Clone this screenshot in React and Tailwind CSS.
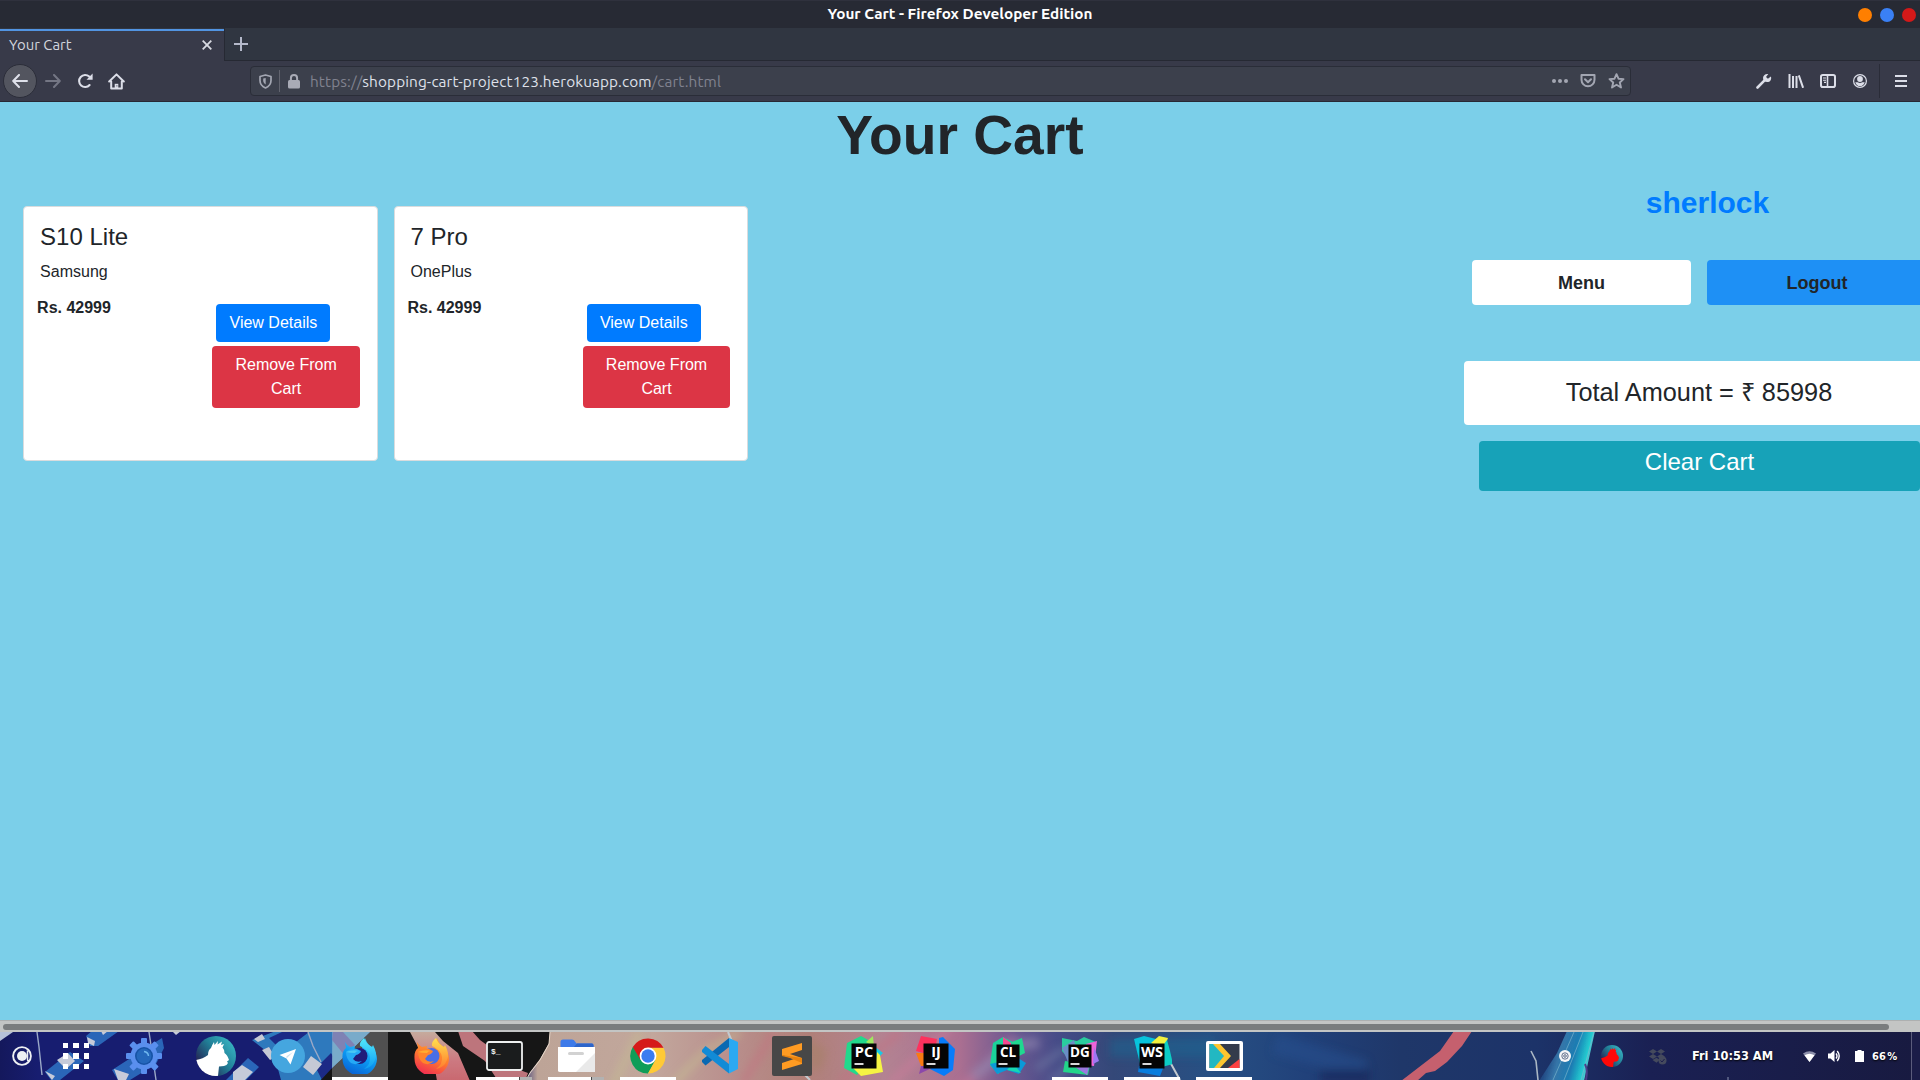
import React from "react";

const products = [
  { name: "S10 Lite", brand: "Samsung", price: "Rs. 42999" },
  { name: "7 Pro", brand: "OnePlus", price: "Rs. 42999" },
];

/* ---------- window title, tabs and toolbar ---------- */

function TitleBar() {
  return (
    <div className="relative flex h-7 shrink-0 items-center justify-center border-t border-[#2f313d] bg-[#272a34]">
      <span className="pb-0.5 text-[15.300px] leading-none font-bold text-white">
        Your Cart - Firefox Developer Edition
      </span>
      <div className="absolute right-1 flex gap-2">
        <i className="size-3.5 rounded-full bg-[#ff7f00]" />
        <i className="size-3.5 rounded-full bg-[#3a80f5]" />
        <i className="size-3.5 rounded-full bg-[#d41919]" />
      </div>
    </div>
  );
}

function TabBar() {
  return (
    <div className="flex h-[33px] shrink-0 bg-[#303641]">
      <div className="mt-px flex w-56 items-center justify-between border-t-2 border-[#5294e2] bg-[#383a49] pr-3 pb-0.5 pl-[9px]">
        <span className="text-[14.9px] leading-none text-[#d3d5de]">Your Cart</span>
        <svg width="10" height="10" viewBox="0 0 10 10" stroke="#d8dae2" strokeWidth="1.8">
          <path d="M.7.7l8.600 8.600M9.300.7L.7 9.300" />
        </svg>
      </div>
      <div className="flex flex-1 items-center border-b border-l border-[#262933] pl-[9px]">
        <svg width="14" height="14" viewBox="0 0 14 14" stroke="#b4b9ca" strokeWidth="2">
          <path d="M7 0v14M0 7h14" />
        </svg>
      </div>
    </div>
  );
}

function Toolbar() {
  return (
    <div className="flex h-[41px] shrink-0 items-center border-b border-[#272934] bg-[#383a49]">
      <div className="ml-[3px] flex size-[34px] items-center justify-center rounded-full border border-[#2b2d39] bg-[#53555f]">
        <svg width="16" height="14" viewBox="0 0 16 14" fill="none" stroke="#dfe1ea" strokeWidth="2" strokeLinecap="round" strokeLinejoin="round">
          <path d="M15 7H1.5M7 1L1.2 7 7 13" />
        </svg>
      </div>
      <svg className="ml-2" width="16" height="14" viewBox="0 0 16 14" fill="none" stroke="#747684" strokeWidth="2" strokeLinecap="round" strokeLinejoin="round">
        <path d="M1 7h13.5M9 1l5.8 6L9 13" />
      </svg>
      <svg className="ml-4" width="17" height="16" viewBox="0 0 17 16" fill="none" stroke="#dcdee8" strokeWidth="2.1">
        <path d="M12.6 12A6 6 0 1 1 12.2 3.6" strokeLinecap="round" />
        <path d="M15.6.6v6.1H9.5z" fill="#dcdee8" stroke="none" />
      </svg>
      <svg className="ml-3.5" width="17" height="17" viewBox="0 0 17 17" fill="none" stroke="#dcdee8" strokeWidth="2" strokeLinejoin="round" strokeLinecap="round">
        <path d="M1.2 8.5L8.5 1.4l7.3 7.1M3.2 8.5v7h10.6v-7" />
        <path d="M8.5 15.2v-4.4" strokeWidth="3.6" strokeLinecap="butt" />
        <path d="M8.9 12.4v1" stroke="#383a49" strokeWidth="1" strokeLinecap="butt" />
      </svg>
      <div className="ml-[125px] flex h-[30px] w-[1381px] items-center rounded-[4px] border border-[#2a2d38] bg-[#3c404c] pr-[5px] pl-2">
        <svg width="13" height="15" viewBox="0 0 13 15" fill="none" stroke="#a3a6b2" strokeWidth="1.7">
          <path d="M6.5 1L12 2.5V6.500c0 3.500-2.200 6-5.500 7.500C3.200 12.500 1 10 1 6.500V2.500z" strokeLinejoin="round" />
          <path d="M6.700 4v6.600C5.200 9.600 4.200 8.300 4.200 6.500V4.500z" fill="#a3a6b2" stroke="none" />
        </svg>
        <i className="ml-[7px] h-[22px] w-px bg-[#62646f]" />
        <svg className="ml-2" width="12" height="15" viewBox="0 0 12 15">
          <path d="M2.900 7V4.200a3.100 3.100 0 0 1 6.200 0V7" fill="none" stroke="#a9abb6" strokeWidth="2" />
          <rect x="0" y="6" width="12" height="8.500" rx="1.500" fill="#a9abb6" />
        </svg>
        <span className="ml-2.5 pt-0.5 text-[15.33px] leading-none tracking-[0.115px] whitespace-nowrap text-[#80828f]">
          https://<span className="text-[#dfe1ea]">shopping-cart-project123.herokuapp.com</span>/cart.html
        </span>
        <div className="ml-auto flex items-center gap-3">
          <svg width="16" height="4" viewBox="0 0 16 4" fill="#a3a6b2">
            <circle cx="2" cy="2" r="2" /><circle cx="8" cy="2" r="2" /><circle cx="14" cy="2" r="2" />
          </svg>
          <svg width="16" height="14" viewBox="0 0 16 14" fill="none" stroke="#a3a6b2" strokeWidth="2" strokeLinecap="round" strokeLinejoin="round">
            <path d="M1.500 1h13v4.800a6.500 6.500 0 0 1-13 0z" /><path d="M5 5.300l3 2.900 3-2.900" />
          </svg>
          <svg width="17" height="16" viewBox="0 0 17 16" fill="none" stroke="#a3a6b2" strokeWidth="1.900" strokeLinejoin="round">
            <path d="M8.500 1.200l2 4.500 5 .4-3.700 3.400 1.200 5-4.500-2.700L4 14.500l1.200-5L1.500 6.100l5-.4z" />
          </svg>
        </div>
      </div>
      <div className="ml-auto flex h-full items-center pr-3">
        <svg width="16" height="16" viewBox="0 0 16 16">
          <path d="M1.500 14.500L8.300 7.700" stroke="#dcdee8" strokeWidth="2.600" strokeLinecap="round" />
          <path d="M14.900 3.400l-3 2.300-1.900-1.600L12.300 1C9.500.4 7 2.200 7 5c0 2.500 1.800 4.100 4.200 4.100 2.900 0 4.700-2.700 3.700-5.700z" fill="#dcdee8" />
        </svg>
        <svg className="ml-4" width="16" height="14" viewBox="0 0 16 14" stroke="#dcdee8" strokeWidth="2">
          <path d="M1.500 0v14M5 2v12M8.500 2v12M10.800 1.300l4.300 12.500" />
        </svg>
        <svg className="ml-4" width="16" height="14" viewBox="0 0 16 14" fill="none" stroke="#dcdee8">
          <rect x="1" y="1" width="14" height="12" rx="1.800" strokeWidth="2" /><path d="M7.500 1v12" strokeWidth="1.600" /><path d="M3 4h3M3 6.200h3M4 8.400h2" strokeWidth="1.100" />
        </svg>
        <svg className="ml-[17px]" width="14" height="14" viewBox="0 0 14 14">
          <circle cx="7" cy="7" r="6.400" fill="none" stroke="#dcdee8" strokeWidth="1.200" />
          <circle cx="7" cy="5" r="2.900" fill="#dcdee8" />
          <path d="M2.300 8.200h2.400c1.500 1.100 3.100 1.100 4.600 0h2.400c-.5 2.400-2.400 3.900-4.700 3.900S2.800 10.600 2.300 8.200z" fill="#dcdee8" />
        </svg>
        <i className="ml-3 h-[34px] w-px bg-[#2a2c38]" />
        <svg className="mr-px ml-[15px]" width="12" height="12" viewBox="0 0 12 12" stroke="#dcdee8" strokeWidth="2">
          <path d="M0 1h12M0 6h12M0 11h12" />
        </svg>
      </div>
    </div>
  );
}

/* ---------- page ---------- */

function ProductCard({ product }) {
  return (
    <article className="h-[255px] w-[354.4px] rounded-[4px] border border-[#d9dcde] bg-white pt-4 pl-[15.700px]">
      <h5 className="text-2xl leading-[28.8px]">{product.name}</h5>
      <p className="mt-2 text-base leading-6">{product.brand}</p>
      <div className="mt-3 flex">
        <strong className="-ml-[3px] w-[175.300px] text-base leading-6">{product.price}</strong>
        <div className="mt-2 flex flex-col items-start gap-1">
          <button className="ml-1 h-[38px] w-[114px] rounded-[4px] bg-[#007bff] text-base text-white">View Details</button>
          <button className="h-[62px] w-[147.500px] rounded-[4px] bg-[#dc3545] px-4 text-base leading-6 text-white">Remove From Cart</button>
        </div>
      </div>
    </article>
  );
}

function CartPage() {
  return (
    <main className="h-[918px] shrink-0 overflow-hidden bg-[#7bcfe9] font-['Liberation_Sans',Arial,sans-serif] text-[#212529]">
      <h1 className="h-[67px] text-center text-[55.200px] leading-[67px] font-bold">Your Cart</h1>
      <div className="flex items-start justify-between">
        <section className="mt-[37px] ml-[23.400px] flex gap-4">
          {products.map((p) => <ProductCard key={p.name} product={p} />)}
        </section>
        <aside className="-mr-3.5 w-[470px]">
          <h2 className="mt-4 pl-[17px] text-center text-[30px] leading-9 font-bold text-[#007bff]">sherlock</h2>
          <nav className="mt-[39px] flex gap-4 pl-2 text-lg font-bold">
            <button className="h-[45px] w-[219px] shrink-0 rounded-[4px] bg-white pt-px">Menu</button>
            <button className="h-[45px] w-[220px] shrink-0 rounded-[4px] bg-[#1e90f5] pt-px">Logout</button>
          </nav>
          <p className="mt-14 h-16 rounded-[4px] bg-white pt-4 text-center text-[25.300px] leading-[30px]">Total Amount = ₹ 85998</p>
          <button className="mt-4 ml-[15px] block h-[50px] w-[441px] rounded-[4px] bg-[#17a2b8] pb-2 text-2xl text-white">Clear Cart</button>
        </aside>
      </div>
    </main>
  );
}

function Scrollbar() {
  return (
    <div className="flex h-3 shrink-0 items-center border-t border-[#adb0b0] bg-[#c3c5c4] pl-[3px]">
      <i className="h-1.5 w-[1886px] rounded-full bg-[#7a7d7e]" />
    </div>
  );
}

/* ---------- dock ---------- */

function Wallpaper() {
  return (
    <svg className="absolute inset-0" width="1920" height="48" viewBox="0 0 1920 48" preserveAspectRatio="none">
      <defs>
        <linearGradient id="sky" x1="0" x2="1920" y1="0" y2="0" gradientUnits="userSpaceOnUse">
          <stop offset="0" stopColor="#14185c" /><stop offset=".02" stopColor="#171d70" /><stop offset=".27" stopColor="#171d70" />
          <stop offset=".28" stopColor="#bda497" /><stop offset=".34" stopColor="#c2a79c" /><stop offset=".38" stopColor="#b98f8d" />
          <stop offset=".42" stopColor="#b08079" /><stop offset=".46" stopColor="#b38392" /><stop offset=".5" stopColor="#aa6f91" />
          <stop offset=".525" stopColor="#705a91" /><stop offset=".55" stopColor="#474c88" /><stop offset=".58" stopColor="#344878" />
          <stop offset=".63" stopColor="#275083" /><stop offset=".68" stopColor="#21417a" /><stop offset=".73" stopColor="#1f3769" />
          <stop offset=".8" stopColor="#1c3369" /><stop offset=".86" stopColor="#1a2053" /><stop offset="1" stopColor="#181a40" />
        </linearGradient>
        <linearGradient id="arm" x1="0" x2="0" y1="0" y2="1"><stop offset="0" stopColor="#c5ab9d" /><stop offset=".6" stopColor="#cc7880" /><stop offset="1" stopColor="#c9686f" /></linearGradient>
        <linearGradient id="ribbon" x1="1545" x2="1592" y1="20" y2="32" gradientUnits="userSpaceOnUse"><stop offset="0" stopColor="#1c3b78" /><stop offset=".3" stopColor="#3576a9" /><stop offset=".6" stopColor="#1b7cb3" /><stop offset=".85" stopColor="#22cbd0" /><stop offset="1" stopColor="#8dbccc" /></linearGradient>
        <filter id="soft"><feGaussianBlur stdDeviation=".6" /></filter>
        <filter id="haze" x="-20%" y="-50%" width="140%" height="200%"><feGaussianBlur stdDeviation="4" /></filter>
      </defs>
      <rect width="1920" height="48" fill="url(#sky)" />
      <g filter="url(#soft)">
        <path d="M0 0h13L0 9z" fill="#b5c1d9" />
        <path d="M86 4L92-1h27l-21 15h-8z M45 40L70 20l14 9-24 19h-9z M112 38l28-18 22-14 2 10-8 16-26 16h-12z M226 48l22-22 11 9-13 13z" fill="#2b66b8" />
        <path d="M87 5l8 4-1 5-6-3z M57 28l11-7 7 8-9 8z M114 37l15 5-3 6h-8z M233 40l9-7 11 7-8 8h-12z M45 39l10 5-3 4z M172-1h9l-5 4z M101-1h7l-5 4z" fill="#c6cbd9" />
        <path d="M252 8L276-1h95l-38 37-12 12h-40l-6-22z" fill="#2f79bd" />
        <path d="M282 0l27 0-26 20-14-14z M316 36l15-15 6 10-15 17z" fill="#1b2c86" />
        <path d="M254 7l8-5 3 5-7 3z M262 18l7-3 6 10-5 3z M311 24l11 8-9 11-10-8z" fill="#c5c9d5" />
        <path d="M37 0l2 15 3 28M149 0l3 20 4 28M308 0l5 14 8 16" fill="none" stroke="#9ba9c7" strokeWidth="1.400" />
        <path d="M371-1h179l-1 12-9 16-10 13-4 9H320l13-14z" fill="#161616" />
        <path d="M333-1h38l-39 37z" fill="#4e8fb9" /><path d="M333 0l10 0 12 13-10 11-13-16z" fill="#55599b" />
        <path d="M410 0h25l8 9 15 12 12 28h-33l-2-12-16-20z" fill="url(#arm)" />
        <path d="M458-1h14l8 9 11 8 15 17 22 8-3 8h-27l-13-20-22-15z" fill="#bd747b" />
        <path d="M550 0l-1 12-9 16-10 13-4 7" fill="none" stroke="#e7d9cb" />
      </g>
      <g filter="url(#haze)" fill="none" strokeWidth="7" opacity=".55">
        <path d="M670 55L705 20 740 0M612 55L640 0" stroke="#c5bf91" />
        <path d="M742 52l32-52M840 50l60-50" stroke="#c56f80" /><path d="M805 12l14 10-5 15" stroke="#a58066" strokeWidth="14" />
        <path d="M890 52L950-4M960 58l54-53" stroke="#cf7d9b" /><path d="M973 45l40-32 26-2" stroke="#9a91b8" strokeWidth="10" />
        <path d="M1036 37l28-20M1050 50l30-24" stroke="#7580a7" /><path d="M1110 16h105" stroke="#1f6591" strokeWidth="18" />
        <path d="M1275 12l90 26" stroke="#25508e" strokeWidth="20" /><path d="M1320 44h50" stroke="#192157" strokeWidth="14" />
      </g>
      <g filter="url(#soft)">
        <path d="M728 0l5 12M804 42l6 6M1170 30l10 18" stroke="#c3c9cf" strokeWidth="2" />
        <path d="M1454-1h18l-10 15-15 16-12 9-9 2-9 8h-16l13-10 26-20z" fill="#c5606e" />
        <path d="M1567-1h28l-11 50h-45l18-28z" fill="url(#ribbon)" />
        <path d="M1594 0l-13 48M1583 0l-19 48M1574 0l-21 48" stroke="#80b9ce" strokeWidth=".9" opacity=".7" />
        <path d="M1531 19l5 10 2 19" stroke="#aab7c4" strokeWidth="1.600" fill="none" />
        <path d="M1585 32q3 6 1 16" stroke="#4b3f89" strokeWidth="2" fill="none" />
        <path d="M1728 45v3" stroke="#8890ad" />
      </g>
      <path d="M1911.500 0v48" stroke="#5b5c7c" />
      <rect x="1912" width="8" height="48" fill="#1b1d48" />
    </svg>
  );
}

const Gear = () => (
  <svg width="36" height="36" viewBox="-18 -18 36 36">
    {[0, 45, 90, 135, 180, 225, 270, 315].map((a) => <rect key={a} x="-3" y="-18" width="6" height="8" rx="1" fill="#5a8fee" transform={`rotate(${a})`} />)}
    <circle r="13.500" fill="#5a8fee" /><circle r="9" fill="#1753a6" /><circle r="7.400" fill="#2467bb" />
    <path d="M0-4.500Q4-4 4.500 0" fill="none" stroke="#6fb7ef" strokeWidth="1.500" />
  </svg>
);

function Bird({ size, body, id }) {
  return (
    <svg width={size} height={size} viewBox="0 0 40 40">
      <defs>
        <linearGradient id={id} x1="1" x2="0" y1="0" y2=".8"><stop offset="0" stopColor="#3ec4cf" /><stop offset=".5" stopColor="#217e96" /><stop offset="1" stopColor="#251046" /></linearGradient>
        <clipPath id={id + "c"}><circle cx="20" cy="20" r="20" /></clipPath>
      </defs>
      <circle cx="20" cy="20" r="20" fill={`url(#${id})`} />
      <path clipPath={`url(#${id}c)`} fill={body} d="M0 24q7-1 12-5 0-5 3-7 1-3 3-6l.5 3 3.500-4-.5 3.500L26 5.500 25 9l3-1-1.500 3.500q2 2 2 5.500 3 2 4.500 7l-2 1.500 1 1.500q-1 2.500-4 3l-5 .5-1 9.500H11Q4 39 0 32z" />
    </svg>
  );
}

const Telegram = () => (
  <svg width="34" height="34" viewBox="0 0 34 34"><circle cx="17" cy="17" r="17" fill="#45a6df" /><path d="M8.500 16L25 10l-5.500 15.500-4-6z" fill="#fff" /><path d="M15.500 19.500L22 13l-6.500 4.200z" fill="#c7dff0" /></svg>
);

function Fox({ id, tail, top, mid, low, globe, face }) {
  return (
    <svg width="36" height="36" viewBox="0 0 36 36">
      <defs>
        <linearGradient id={id} x1=".7" x2=".3" y1="0" y2="1"><stop offset="0" stopColor={top} /><stop offset=".5" stopColor={mid} /><stop offset="1" stopColor={low} /></linearGradient>
        <linearGradient id={id + "t"} x1="0" x2="0" y1="0" y2="1"><stop offset="0" stopColor={tail} /><stop offset="1" stopColor={mid} /></linearGradient>
      </defs>
      <path d="M3 4q2 4 5 5l5-1-1 6 7 1 2-10 2-5q3 8 7 9 5 6 5 12A17 17 0 0 1 .500 20Q0 13 4 10z" fill={`url(#${id})`} />
      <circle cx="17.500" cy="18" r="8" fill={globe} />
      <path d="M18 8q-1-4 4-8 2 6 8 9l1-2q5 9 2 15-3 8-11 9 7-5 6-12T18 8z" fill={`url(#${id}t)`} />
      <path d="M4 14q5-5 11-3l4 2q-1 3-5 4l-3 4q3 4 9 2-5 5-11 2-5-4-5-11z" fill={face} />
      <path d="M4 14q7-3 13-1-3 0-4 2-5 0-9-1z" fill={top} />
    </svg>
  );
}

const Terminal = () => (
  <svg width="37" height="30" viewBox="0 0 37 30"><rect x="1" y="1" width="35" height="28" rx="2" fill="#1a1c1d" stroke="#eef0f0" strokeWidth="1.800" /><text x="5" y="12.500" fill="#f4f4f4" fontSize="8" fontFamily="Liberation Mono" fontWeight="bold">$_</text></svg>
);

const Folder = () => (
  <svg width="37" height="34" viewBox="0 0 37 34"><path d="M2.500 12V3Q2.500.500 5 .500h9q2 0 3 2l1.500 2H34q1.500 0 1.500 2V14h-33z" fill="#3d7ae9" /><path d="M19 4.500h15q1.500 0 1.500 2V9H15z" fill="#2c65cb" /><path d="M0 8h37v23.500Q37 33 35 33H2Q0 33 0 31.500z" fill="#fff" /><path d="M37 14v19H18z" fill="#e9e9e9" /><rect x="10" y="13" width="16" height="3" rx="1.500" fill="#d2d2d2" /></svg>
);

const Chrome = () => (
  <svg width="36" height="36" viewBox="0 0 36 36">
    <path d="M2.800 9A17.600 17.600 0 0 0 18 35.600L25.400 22.500 18 18z" fill="#0f9d58" />
    <path d="M18 9.800h15.500A17.600 17.600 0 0 1 18 35.600L25.400 22z" fill="#ffca36" />
    <path d="M2.800 9A17.600 17.600 0 0 1 33.500 9.800H18L10.600 22z" fill="#d51a1a" />
    <circle cx="18" cy="18" r="8.400" fill="#fff" /><circle cx="18" cy="18" r="6.700" fill="#3a7cf0" />
  </svg>
);

const VSCode = () => (
  <svg width="36" height="36" viewBox="0 0 36 36"><path d="M0 24l3.500 3.500L27 9V0L0 22z" fill="#0a69b2" /><path d="M0 12l3.500-4L27 26v9.500L0 14z" fill="#128bd6" /><path d="M27 0l9 4v27l-9 4.500z" fill="#2ba9f2" /></svg>
);

const Sublime = () => (
  <svg width="40" height="40" viewBox="0 0 40 40"><rect width="40" height="40" rx="2" fill="#474747" /><path d="M10 13l20-6v7l-12 4 12 4v6l-20 6v-7l12-4-12-4z" fill="#ff9b22" /><path d="M10 20v-1l20 3v5l-12-5z" fill="#e8830f" /></svg>
);

function JetBrains({ label, shapes, size = 25 }) {
  return (
    <svg width="40" height="40" viewBox="0 0 40 40">
      {shapes.map(([d, fill]) => <path key={d} d={d} fill={fill} />)}
      <rect x={20 - size / 2} y={20 - size / 2} width={size} height={size} fill="#050505" />
      <text x="20" y="21" textAnchor="middle" fill="#fff" fontSize={size === 25 ? 14.5 : 13.5} fontFamily="Open Sans" fontWeight="bold">{label}</text>
      <path d="M10.500 28h9" stroke="#fff" strokeWidth="1.700" />
    </svg>
  );
}

const Run = () => (
  <svg width="37" height="30" viewBox="0 0 37 30"><rect width="37" height="30" rx="2" fill="#fff" /><path d="M3.500 3h30v24h-30z" fill="#343b4b" /><path d="M3.500 3h7l8 12-9 12h-6z" fill="#22b8c2" /><path d="M7 3h7l11 12-11 12H8l10-12z" fill="#fdc52f" /><path d="M33.500 18v9H22z" fill="#fc4141" /></svg>
);

const apps = [
  { icon: <Gear /> },
  { icon: <Bird size={40} body="#fff" id="birdA" /> },
  { icon: <Telegram /> },
  { icon: <Fox id="dev" tail="#53e9fb" top="#49c8f5" mid="#0c9cf3" low="#095fd3" globe="#211b7a" face="#25a9f6" />, active: true, open: true },
  { icon: <Fox id="ff" tail="#ffe14f" top="#ffad30" mid="#ff7c2e" low="#f02953" globe="#496ee6" face="#ff842b" /> },
  { icon: <Terminal />, open: true, more: true },
  { icon: <Folder />, open: true, more: true },
  { icon: <Chrome />, open: true },
  { icon: <VSCode /> },
  { icon: <Sublime /> },
  { icon: <JetBrains label="PC" shapes={[["M3 7L17 0l9 5v16L13 39 0 32z", "#22d98c"], ["M22 6l7-6 1 11z", "#9fe85f"], ["M30 10l9 7-8 8z", "#14cbe8"], ["M33 16l3 3 3 17-22 4-8-8 23-7z", "#f5f443"]]} /> },
  { icon: <JetBrains label="IJ" shapes={[["M5 0l16 3-3 17L0 15z", "#fe315d"], ["M0 17h10v13H5z", "#f97a12"], ["M5 30h15l-17 8z", "#8b48aa"], ["M23 2l4-1 12 12-2 21-9 6-14-7 9-13z", "#087cfa"]]} /> },
  { icon: <JetBrains label="CL" size={23} shapes={[["M5 7l10-6 10 5-5 23-10 9-8-9z", "#1bd29a"], ["M15 1l8 6v7h-8z", "#f64891"], ["M24 6l10-4 3 15-8 4z", "#20d890"], ["M30 22l8 5-7 11-12-4-10 4-7-10z", "#0b9ad8"], ["M25 27l8 10-14-3z", "#17d7b1"]]} /> },
  { icon: <JetBrains label="DG" size={23} shapes={[["M2 2l15 3 7-4 12 5-5 12-18 10-11-13z", "#29cc9e"], ["M2 12l12-8 5 18-11 4z", "#6b8dc6"], ["M26 8l11-3-3 25-9-1z", "#ee64d9"], ["M34 11l5 14-6 3z", "#9d77f2"], ["M5 25l25 4-2 10-25-3z", "#22d58a"], ["M15 31h14l-2 8z", "#9a78df"]]} />, open: true },
  { icon: <JetBrains label="WS" shapes={[["M2 3l10-3 16 4v28L9 32z", "#07c3dc"], ["M19 7L27 0l9 2-4 11z", "#f2f13e"], ["M32 8l3-4 3 11 3 13-11 3z", "#0dccc4"], ["M7 30h25l-4 10-22-4z", "#087dde"]]} />, open: true },
  { icon: <Run />, open: true },
];

function Dock() {
  return (
    <footer className="relative h-12 shrink-0 overflow-hidden bg-[#171d70]">
      <Wallpaper />
      <div className="relative flex h-full items-center">
        <svg className="ml-3" width="20" height="20" viewBox="0 0 20 20"><circle cx="10" cy="10" r="8.900" fill="none" stroke="#eef0f3" strokeWidth="1.900" /><circle cx="10" cy="10" r="5" fill="#eef0f3" /><path d="M15.500 4.500v9q0 2 2 1" fill="none" stroke="#eef0f3" strokeWidth="1.500" /></svg>
        <div className="ml-[31px] grid grid-cols-3 gap-[5px]">
          {Array.from({ length: 9 }, (_, i) => <i key={i} className="size-[5.300px] bg-white" />)}
        </div>
        <div className="ml-[19.500px] flex h-full w-[1152px]">
          {apps.map((a, i) => (
            <div key={i} className="flex h-full w-[72px] shrink-0 justify-center">
              <div className={`relative flex h-full w-14 items-center justify-center ${a.active ? "bg-white/25" : ""}`}>
                {a.icon}
                {a.open && (
                  <div className="absolute inset-x-0 bottom-0 flex h-[3px]">
                    <i className="flex-1 bg-white" />
                    {a.more && <i className="w-[13px] border-l border-[#454545] bg-[#b2b2b2]" />}
                  </div>
                )}
              </div>
            </div>
          ))}
        </div>
        <div className="ml-auto flex items-center pr-[22px] font-['DejaVu_Sans_Condensed','DejaVu_Sans',sans-serif] text-white [font-stretch:condensed] [text-shadow:0_1px_2px_#000]">
          <svg width="12" height="12" viewBox="0 0 12 12"><circle cx="6" cy="6" r="6" fill="#f5f5f7" /><circle cx="6" cy="6" r="3.200" fill="none" stroke="#253960" strokeWidth=".7" /><circle cx="6" cy="6" r="1.300" fill="none" stroke="#253960" strokeWidth=".7" /></svg>
          <div className="ml-[30px]"><Bird size={22} body="#fe0808" id="birdB" /></div>
          <svg className="ml-[26px]" width="18" height="17" viewBox="0 0 18 17" fill="#454a5d"><path d="M4 1l4 2.500L4 6 0 3.500zM12 1l4 2.500L12 6 8 3.500zM4 6l4 2.500L4 11 0 8.500zM12 6l4 2.500L12 11 8 8.500zM3.500 12l4-2.200 3 2-3 3z" /><circle cx="13.500" cy="12.500" r="4" /><path d="M11.500 12.500l1.500 1.500 2.500-3" fill="none" stroke="#1c1e4d" /></svg>
          <span className="ml-[25px] w-[84px] text-[12.700px] leading-none font-bold whitespace-nowrap">Fri 10:53 AM</span>
          <svg className="ml-[27px]" width="13" height="11" viewBox="0 0 13 11"><path d="M0 2.500Q6.500-2 13 2.500L6.500 11z" fill="#8c8faa" /><path d="M1.500 4.300q5-3 10 0L6.500 11z" fill="#fff" /></svg>
          <svg className="ml-3" width="13" height="12" viewBox="0 0 13 12"><path d="M0 3.500h2.500L6.500 0v12l-4-3.500H0z" fill="#fff" /><path d="M8 3.500q2 2.500 0 5M9.200 1q4 5 0 10" fill="none" stroke="#fff" strokeWidth="1.400" /></svg>
          <svg className="ml-3.5" width="9" height="12" viewBox="0 0 9 12"><path d="M2.500 0h4v1H9v11H0V1h2.500z" fill="#fff" /></svg>
          <span className="ml-2 flex w-[26px] gap-[1.500px] text-[11px] leading-none font-bold whitespace-nowrap"><span>66</span><span>%</span></span>
        </div>
      </div>
    </footer>
  );
}

export default function App() {
  return (
    <div className="flex h-[1080px] w-[1920px] flex-col overflow-hidden font-['Ubuntu','Noto_Sans',sans-serif]">
      <TitleBar />
      <TabBar />
      <Toolbar />
      <CartPage />
      <Scrollbar />
      <Dock />
    </div>
  );
}
